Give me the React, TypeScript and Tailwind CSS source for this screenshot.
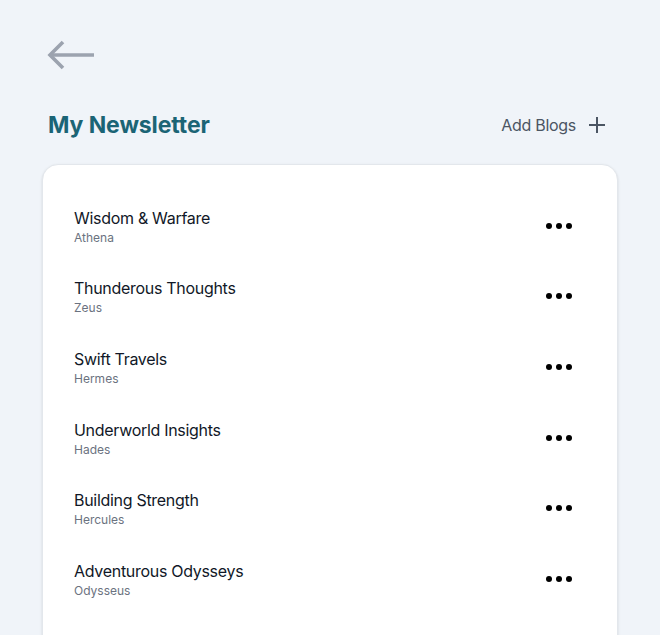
import React from "react";

const blogs = [
  { title: "Wisdom & Warfare", author: "Athena" },
  { title: "Thunderous Thoughts", author: "Zeus" },
  { title: "Swift Travels", author: "Hermes" },
  { title: "Underworld Insights", author: "Hades" },
  { title: "Building Strength", author: "Hercules" },
  { title: "Adventurous Odysseys", author: "Odysseus" },
];

function Dots() {
  return (
    <svg width="28" height="8" viewBox="0 0 28 8" fill="currentColor">
      <circle cx="4" cy="4" r="3" />
      <circle cx="14" cy="4" r="3" />
      <circle cx="24" cy="4" r="3" />
    </svg>
  );
}

export default function App() {
  return (
    <div
      className="min-h-screen bg-[#f0f4f9] px-[42px] pt-[40px]"
      style={{ fontFamily: "Inter, 'Liberation Sans', sans-serif" }}
    >
      {/* back arrow */}
      <button className="ml-[5px] block text-[#9ca3af]">
        <svg width="48" height="30" viewBox="0 0 48 30" fill="none" stroke="currentColor" strokeWidth="3.6">
          <path d="M3 15H47" />
          <path d="M16 2L3 15L16 28" />
        </svg>
      </button>

      <div className="mt-[38px] flex items-center justify-between pl-[6px] pr-[12px]">
        <h1 className="text-[23px] font-bold tracking-[-0.1px] text-[#1b6475]">My Newsletter</h1>
        <button className="flex items-center gap-[12px] text-base tracking-[-0.3px] text-[#4b5563]">
          Add Blogs
          <svg width="18" height="18" viewBox="0 0 18 18" fill="none" stroke="currentColor" strokeWidth="2">
            <path d="M9 1V17M1 9H17" />
          </svg>
        </button>
      </div>

      <div className="mt-[21px] rounded-2xl border border-[#e3e7ec] bg-white pt-[26px] pb-16 pl-[31px] pr-[44px] shadow-sm">
        {blogs.map((b) => (
          <div key={b.title} className="flex items-center justify-between py-[15.3px]">
            <div>
              <div className="text-base leading-6 tracking-[-0.3px] text-[#111827]">{b.title}</div>
              <div className="text-xs leading-4 text-[#6b7280]">{b.author}</div>
            </div>
            <button className="text-black">
              <Dots />
            </button>
          </div>
        ))}
      </div>
    </div>
  );
}
